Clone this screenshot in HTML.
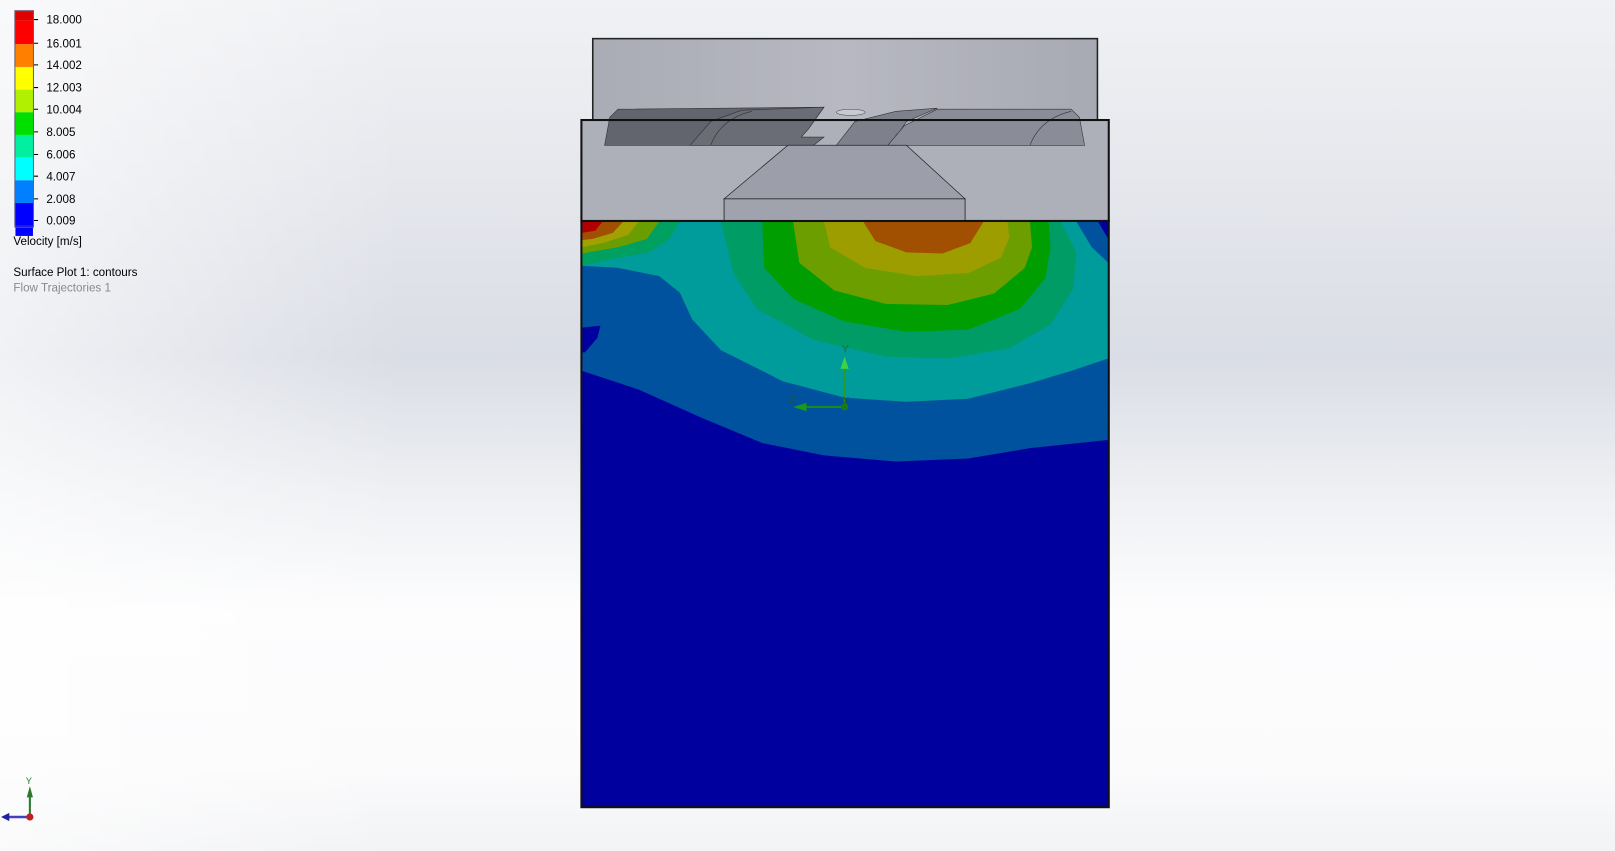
<!DOCTYPE html>
<html><head><meta charset="utf-8"><style>
html,body{margin:0;padding:0;width:1615px;height:851px;overflow:hidden;background:#fff}
svg{display:block}
text{font-family:"Liberation Sans",Arial,sans-serif}
</style></head><body>
<svg width="1615" height="851" viewBox="0 0 1568 826" preserveAspectRatio="none" xmlns="http://www.w3.org/2000/svg">
<defs>
<linearGradient id="bg" x1="0" y1="0" x2="0" y2="1">
<stop offset="0" stop-color="#f0f1f4"/>
<stop offset="0.2" stop-color="#e6e8ed"/>
<stop offset="0.42" stop-color="#dadde5"/>
<stop offset="0.58" stop-color="#eef0f3"/>
<stop offset="0.72" stop-color="#fdfdfe"/>
<stop offset="0.9" stop-color="#fbfbfc"/>
<stop offset="1" stop-color="#f2f3f5"/>
</linearGradient>
<linearGradient id="lw" x1="0" y1="0" x2="1" y2="0">
<stop offset="0" stop-color="#ffffff" stop-opacity="0.6"/>
<stop offset="0.25" stop-color="#ffffff" stop-opacity="0"/>
<stop offset="1" stop-color="#ffffff" stop-opacity="0"/>
</linearGradient>
<linearGradient id="g1" x1="0" y1="0" x2="1" y2="0">
<stop offset="0" stop-color="#a9abb5"/><stop offset="0.5" stop-color="#b7b8c2"/><stop offset="1" stop-color="#a7a9b3"/>
</linearGradient>
</defs>
<rect width="1568" height="826" fill="url(#bg)"/>
<rect width="1568" height="826" fill="url(#lw)"/>

<!-- legend -->
<rect x="14" y="10" width="19" height="10" fill="#e00000"/>
<rect x="14" y="20" width="19" height="23" fill="#ff0000"/>
<rect x="14" y="43" width="19" height="22" fill="#ff8000"/>
<rect x="14" y="65" width="19" height="22" fill="#ffff00"/>
<rect x="14" y="87" width="19" height="22" fill="#b0f000"/>
<rect x="14" y="109" width="19" height="22" fill="#00e000"/>
<rect x="14" y="131" width="19" height="22" fill="#00f0a0"/>
<rect x="14" y="153" width="19" height="22" fill="#00ffff"/>
<rect x="14" y="175" width="19" height="22" fill="#0080ff"/>
<rect x="14" y="197" width="19" height="22" fill="#0000ff"/>
<rect x="15" y="219" width="17" height="10" fill="#0000ff"/>
<rect x="14.5" y="10.5" width="18" height="210" fill="none" stroke="#606080" stroke-width="1"/>
<g fill="#000" font-size="11.3">
<text x="45" y="23">18.000</text><text x="45" y="46">16.001</text><text x="45" y="67">14.002</text>
<text x="45" y="89">12.003</text><text x="45" y="110">10.004</text><text x="45" y="132">8.005</text>
<text x="45" y="154">6.006</text><text x="45" y="175">4.007</text><text x="45" y="197">2.008</text>
<text x="45" y="218">0.009</text>
<text x="13" y="238">Velocity [m/s]</text>
<text x="13" y="268">Surface Plot 1: contours</text>
</g>
<g stroke="#000" stroke-width="1"><path d="M33 19h4M33 42h4M33 63h4M33 85h4M33 106h4M33 128h4M33 150h4M33 171h4M33 193h4M33 214h4"/></g>
<text x="13" y="283" font-size="11.3" fill="#8a8a8a">Flow Trajectories 1</text>

<!-- top box -->
<rect x="575.5" y="37.5" width="490" height="80" fill="url(#g1)" stroke="#222" stroke-width="1.5"/>
<!-- lower gray box -->
<rect x="564.5" y="116.5" width="512" height="98" fill="#adafb9"/>
<!-- blades -->
<path d="M587 141 L592 114 L600 106 L800 104 L785 125 L770 141 Z" fill="#62646e" stroke="#333" stroke-width="0.6"/>
<path d="M670 141 L690 118 L720 107 L800 104 L785 125 L778 133 L800 133 L790 141 Z" fill="#6a6c76" stroke="#333" stroke-width="0.6"/>
<path d="M812 141 L830 118 L870 108 L910 105 L880 118 L872 130 L862 141 Z" fill="#7e808c" stroke="#333" stroke-width="0.6"/>
<path d="M870 131 L877 125 L895 125 L890 133 Z" fill="#888a96" stroke="#333" stroke-width="0.6"/>
<path d="M862 141 L878 122 L910 106 L1040 106 L1048 114 L1053 141 Z" fill="#8a8c98" stroke="#333" stroke-width="0.6"/>
<path d="M1000 141 Q1010 115 1040 108" fill="none" stroke="#333" stroke-width="0.6"/>
<path d="M690 141 Q700 115 730 108" fill="none" stroke="#333" stroke-width="0.6"/>
<ellipse cx="826" cy="109" rx="14" ry="3" fill="#c8cad2" stroke="#444" stroke-width="0.5"/>
<rect x="564.5" y="116.5" width="512" height="98" fill="none" stroke="#111" stroke-width="2"/>
<!-- hub -->
<path d="M765 141 L880 141 L937 193 L703 193 Z" fill="#9c9ea9" stroke="#222" stroke-width="0.7"/>
<rect x="703" y="193" width="234" height="21" fill="#a0a2ad" stroke="#222" stroke-width="0.8"/>

<!-- contour plot -->
<g>
<rect x="565" y="215" width="511" height="568" fill="#00009f"/>
<path d="M565 215 H1076 V427 L1000 435 L940 445 L870 448 L800 442 L740 430 L680 405 L620 378 L565 360 Z" fill="#00529e"/>
<path d="M565 318 L583 316 L580 328 L568 342 L565 342 Z" fill="#00009f"/>
<path d="M565 215 H1045 L1060 240 L1076 255 V348 L1040 360 L1000 372 L940 387 L880 390 L820 386 L760 370 L700 340 L672 310 L660 284 L640 268 L600 260 L565 258 Z" fill="#009b9b"/>
<path d="M1055 215 H1076 V248 L1068 240 Z" fill="#00529e"/>
<path d="M1066 215 H1076 V232 Z" fill="#00009f"/>
<path d="M700 215 L712 265 L735 300 L790 330 L860 346 L920 348 L980 338 L1020 315 L1042 280 L1045 245 L1030 215 Z" fill="#009c66"/>
<path d="M740 215 L742 260 L770 290 L820 312 L880 322 L940 320 L990 300 L1015 270 L1020 240 L1018 215 Z" fill="#009e00"/>
<path d="M770 215 L776 255 L810 282 L860 295 L920 296 L965 285 L995 260 L1002 240 L1000 215 Z" fill="#6c9e00"/>
<path d="M800 215 L806 240 L840 260 L890 268 L940 265 L972 250 L980 230 L978 215 Z" fill="#9d9d00"/>
<path d="M838 215 L850 234 L880 245 L915 246 L942 236 L955 215 Z" fill="#a05000"/>
<!-- top-left hot spot -->
<path d="M565 215 H660 L650 232 L630 245 L600 250 L565 258 Z" fill="#00a060"/>
<path d="M565 215 H640 L628 232 L600 240 L565 246 Z" fill="#6a9e00"/>
<path d="M565 215 H620 L610 228 L585 236 L565 240 Z" fill="#a0a000"/>
<path d="M565 215 H605 L595 226 L575 232 L565 233 Z" fill="#a05000"/>
<path d="M565 215 H585 L578 224 L565 226 Z" fill="#b00000"/>
<rect x="564.5" y="214.5" width="512" height="569" fill="none" stroke="#111" stroke-width="2"/>
</g>

<!-- center triad -->
<g>
<line x1="820" y1="395" x2="820" y2="355" stroke="#2a9a2a" stroke-width="1.5"/>
<path d="M816 358 L820 346 L824 358 Z" fill="#40d040"/>
<line x1="820" y1="395" x2="780" y2="395" stroke="#1a8a1a" stroke-width="2"/>
<path d="M783 391 L770 395 L783 399 Z" fill="#1a9a1a"/>
<circle cx="820" cy="395" r="3.5" fill="#1a7a1a"/>
<text x="817" y="342" font-size="11" fill="#2a6a2a">Y</text>
<text x="766" y="392" font-size="11" fill="#1a5a1a">Z</text>
<text x="818" y="392" font-size="10" fill="#1a5a1a">X</text>
</g>

<!-- bottom-left triad -->
<g>
<line x1="29" y1="793" x2="29" y2="772" stroke="#2a7a2a" stroke-width="2"/>
<path d="M26 774 L29 763 L32 774 Z" fill="#2a7a2a"/>
<line x1="29" y1="793" x2="8" y2="793" stroke="#4040c0" stroke-width="2.5"/>
<path d="M9 789 L1 793 L9 797 Z" fill="#2020a0"/>
<circle cx="29" cy="793" r="3.5" fill="#c02020"/>
<text x="25" y="761" font-size="9" fill="#2a7a2a">Y</text>
</g>
</svg>
</body></html>
